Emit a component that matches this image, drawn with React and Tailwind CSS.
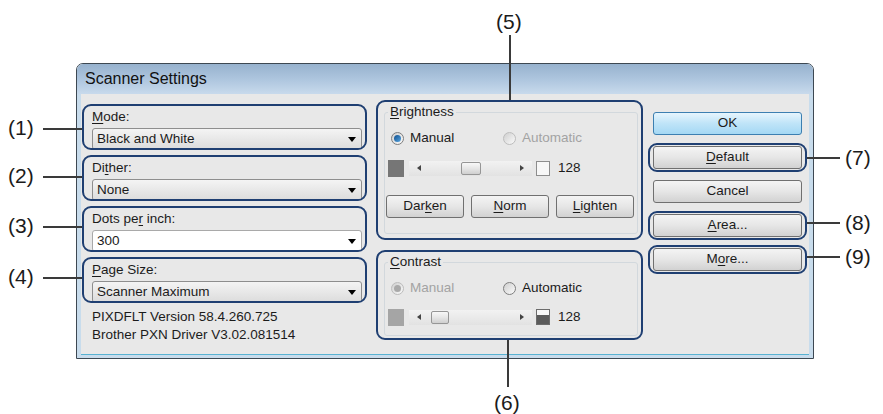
import React from 'react'

const U = ({ children }) => <span className="underline underline-offset-[2px] decoration-1">{children}</span>

const Radio = ({ checked, disabled }) => (
  <span className={`w-[13px] h-[13px] rounded-full border flex items-center justify-center bg-gradient-to-br from-[#cfcfcf] to-[#fbfbfb] ${disabled ? 'border-[#bcbcbc]' : 'border-[#7e7e7e]'}`}>
    {checked && (
      <span className={`w-[7px] h-[7px] rounded-full ${disabled ? 'bg-[#a9a9a9]' : 'bg-gradient-to-br from-[#0c4f8f] to-[#58a6e0]'}`} />
    )}
  </span>
)

const Combo = ({ value, white }) => (
  <div className={`h-[22px] w-[270px] rounded-[3px] border flex items-center justify-between pl-[4px] pr-[5px] ${white ? 'bg-white border-[#a9a9a9]' : 'bg-gradient-to-b from-[#f4f4f4] to-[#dcdcdc] border-[#8e8e8e]'}`}>
    <span>{value}</span>
    <span className="w-0 h-0 border-x-[4px] border-x-transparent border-t-[5px] border-t-black" />
  </div>
)

const Field = ({ label, value, white }) => (
  <div className="h-[46px] border-2 border-[#1f3f72] rounded-[9px] pl-[8px] pt-[1px] overflow-hidden">
    <div className="leading-[16px] pt-[2px]">{label}</div>
    <div className="mt-[3px]">
      <Combo value={value} white={white} />
    </div>
  </div>
)

const Track = ({ thumb }) => (
  <div className="relative w-[123px] h-[15px] bg-gradient-to-b from-[#f2f2f2] to-[#e2e2e2] flex items-center justify-between px-[8px]">
    <span className="w-0 h-0 border-y-[3px] border-y-transparent border-r-[4px] border-r-[#444]" />
    <span className="w-0 h-0 border-y-[3px] border-y-transparent border-l-[4px] border-l-[#444]" />
    <span className={`absolute top-[1px] h-[13px] rounded-[2px] border border-[#969696] bg-gradient-to-b from-[#f8f8f8] via-[#e6e6e6] to-[#cfcfcf] ${thumb}`} />
  </div>
)

const WinButton = ({ children, primary }) => (
  <div className={`h-[23px] rounded-[3px] border flex items-center justify-center ${primary ? 'border-[#3c7fb1] bg-gradient-to-b from-[#e6f5fd] via-[#bfe4f8] to-[#a4d8f4]' : 'border-[#707070] bg-gradient-to-b from-[#f4f4f4] via-[#e6e6e6] to-[#d2d2d2]'}`}>
    {children}
  </div>
)

const Slot = ({ children, outlined, primary }) => (
  <div className={`h-[29px] border-2 rounded-[9px] flex flex-col justify-center px-[3px] ${outlined ? 'border-[#1f3f72]' : 'border-transparent'}`}>
    <WinButton primary={primary}>{children}</WinButton>
  </div>
)

const Group = ({ legend, children, className }) => (
  <fieldset className={`border border-[#d2d8dd] rounded-[3px] ml-[6px] mr-[3px] mt-[2px] ${className}`}>
    <legend className="ml-[3px] px-[2px] leading-[16px]">{legend}</legend>
    {children}
  </fieldset>
)

export default function App() {
  return (
    <div className="relative w-[883px] h-[414px] bg-white overflow-hidden font-['Liberation_Sans',Arial,sans-serif] text-[13.5px] text-[#1b1b1b]">
      <div className="pt-[63px] pl-[76px]">
        <div className="w-[738px] h-[296px] border border-[#3d4852] rounded-t-[7px] flex flex-col overflow-hidden">
          <div className="h-[30px] shrink-0 bg-gradient-to-b from-[#97b2ce] via-[#adc5de] to-[#c8daec] pl-[8px] flex items-center text-[16px] text-[#111]">
            Scanner Settings
          </div>
          <div className="flex-1 border-x-[4px] border-b-[3px] border-[#c8dcec] shadow-[inset_0_0_0_1px_#e0ecf5]">
            <div className="h-full bg-[#e8e8e8] border-b border-[#58b2d2] flex items-start pl-[1px] pt-[6px]">
              {/* left column */}
              <div className="w-[285px] mt-[4px] flex flex-col gap-[5px]">
                <Field label={<><U>M</U>ode:</>} value="Black and White" />
                <Field label={<>Di<U>t</U>her:</>} value="None" />
                <Field label={<>Dots pe<U>r</U> inch:</>} value="300" white />
                <Field label={<><U>P</U>age Size:</>} value="Scanner Maximum" />
                <div className="pl-[10px] leading-[18px]">
                  <div>PIXDFLT Version 58.4.260.725</div>
                  <div>Brother PXN Driver V3.02.081514</div>
                </div>
              </div>

              {/* middle column */}
              <div className="w-[267px] ml-[9px] flex flex-col gap-[10px]">
                <div className="h-[140px] border-2 border-[#1f3f72] rounded-[9px]">
                  <Group legend={<><U>B</U>rightness</>} className="h-[130px]">
                    <div className="flex items-center h-[16px] mt-[10px] pl-[6px]">
                      <div className="w-[112px] flex items-center gap-[6px]">
                        <Radio checked />
                        <span>Manual</span>
                      </div>
                      <div className="flex items-center gap-[6px] text-[#a3a3a3]">
                        <Radio disabled />
                        <span>Automatic</span>
                      </div>
                    </div>
                    <div className="flex items-center h-[18px] mt-[13px] pl-[3px]">
                      <span className="w-[16px] h-[17px] bg-[#767676]" />
                      <div className="ml-[5px]"><Track thumb="left-[52px] w-[20px]" /></div>
                      <span className="ml-[4px] w-[14px] h-[15px] border border-[#8d8d8d] bg-[#f7f7f7]" />
                      <span className="ml-[8px]">128</span>
                    </div>
                    <div className="flex gap-[7px] mt-[18px] pl-[1px]">
                      <div className="w-[78px]"><WinButton>Dar<U>k</U>en</WinButton></div>
                      <div className="w-[78px]"><WinButton><U>N</U>orm</WinButton></div>
                      <div className="w-[78px]"><WinButton><U>L</U>ighten</WinButton></div>
                    </div>
                  </Group>
                </div>
                <div className="h-[90px] border-2 border-[#1f3f72] rounded-[9px]">
                  <Group legend={<><U>C</U>ontrast</>} className="h-[82px]">
                    <div className="flex items-center h-[16px] mt-[10px] pl-[6px]">
                      <div className="w-[112px] flex items-center gap-[6px] text-[#a3a3a3]">
                        <Radio checked disabled />
                        <span>Manual</span>
                      </div>
                      <div className="flex items-center gap-[6px]">
                        <Radio />
                        <span>Automatic</span>
                      </div>
                    </div>
                    <div className="flex items-center h-[18px] mt-[12px] pl-[3px]">
                      <span className="w-[16px] h-[17px] bg-[#a5a5a5]" />
                      <div className="ml-[5px]"><Track thumb="left-[22px] w-[18px]" /></div>
                      <span className="ml-[4px] w-[14px] h-[16px] border border-[#6c6c6c] flex flex-col">
                        <span className="h-[5px] bg-[#f7f7f7]" />
                        <span className="flex-1 bg-[#5b5b5b]" />
                      </span>
                      <span className="ml-[8px]">128</span>
                    </div>
                  </Group>
                </div>
              </div>

              {/* right column */}
              <div className="w-[159px] ml-[5px] mt-[9px] flex flex-col gap-[5px]">
                <Slot primary>OK</Slot>
                <Slot outlined><U>D</U>efault</Slot>
                <Slot>Cancel</Slot>
                <Slot outlined><U>A</U>rea...</Slot>
                <Slot outlined>M<U>o</U>re...</Slot>
              </div>
            </div>
          </div>
        </div>
      </div>

      {/* callouts */}
      <div className="absolute inset-0 pointer-events-none text-[21px] leading-[24px] text-[#1b1b1b]">
        <span className="absolute left-[8px] top-[116px]">(1)</span>
        <span className="absolute left-[43px] top-[128px] w-[39px] h-[2px] bg-[#3a3a3a]" />
        <span className="absolute left-[8px] top-[164px]">(2)</span>
        <span className="absolute left-[43px] top-[176px] w-[39px] h-[2px] bg-[#3a3a3a]" />
        <span className="absolute left-[8px] top-[214px]">(3)</span>
        <span className="absolute left-[43px] top-[226px] w-[39px] h-[2px] bg-[#3a3a3a]" />
        <span className="absolute left-[8px] top-[265px]">(4)</span>
        <span className="absolute left-[43px] top-[277px] w-[39px] h-[2px] bg-[#3a3a3a]" />

        <span className="absolute left-[496px] top-[10px]">(5)</span>
        <span className="absolute left-[509px] top-[35px] w-[2px] h-[65px] bg-[#3a3a3a]" />
        <span className="absolute left-[494px] top-[391px]">(6)</span>
        <span className="absolute left-[507px] top-[340px] w-[2px] h-[47px] bg-[#3a3a3a]" />

        <span className="absolute left-[807px] top-[157px] w-[33px] h-[2px] bg-[#3a3a3a]" />
        <span className="absolute left-[845px] top-[146px]">(7)</span>
        <span className="absolute left-[807px] top-[222px] w-[33px] h-[2px] bg-[#3a3a3a]" />
        <span className="absolute left-[845px] top-[211px]">(8)</span>
        <span className="absolute left-[807px] top-[256px] w-[33px] h-[2px] bg-[#3a3a3a]" />
        <span className="absolute left-[845px] top-[245px]">(9)</span>
      </div>
    </div>
  )
}
